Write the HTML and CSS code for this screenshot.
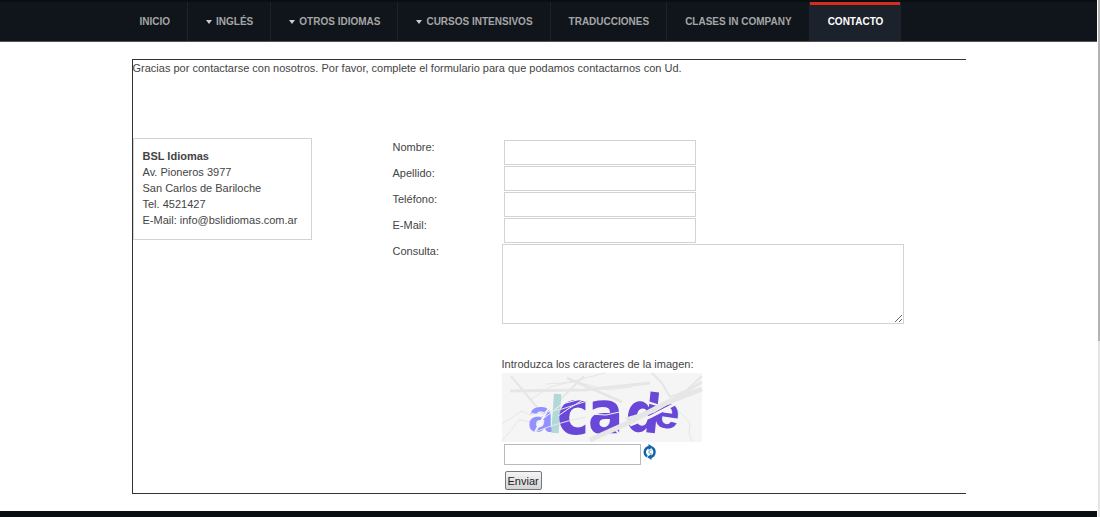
FILE: index.html
```html
<!DOCTYPE html>
<html lang="es">
  <head>
    <meta charset="utf-8">
    <title>BSL Idiomas - Contacto</title>
    <link rel="stylesheet" href="styles.css">
  </head>
  <body>
    <div class="page">
      <nav class="menu">
        <ul>
          <li><a href="#">INICIO</a></li>
          <li><a class="parent" href="#">INGLÉS</a></li>
          <li><a class="parent" href="#">OTROS IDIOMAS</a></li>
          <li><a class="parent" href="#">CURSOS INTENSIVOS</a></li>
          <li><a href="#">TRADUCCIONES</a></li>
          <li><a href="#">CLASES IN COMPANY</a></li>
          <li><a class="active" href="#">CONTACTO</a></li>
        </ul>
      </nav>

      <main class="content">
        <p class="intro">Gracias por contactarse con nosotros. Por favor, complete el formulario para que podamos contactarnos con Ud.</p>
        <div class="columns">
          <address class="info">
            <strong>BSL Idiomas</strong><br>
            Av. Pioneros 3977<br>
            San Carlos de Bariloche<br>
            Tel. 4521427<br>
            E-Mail: info@bslidiomas.com.ar
          </address>

          <form class="contact-form">
            <div class="row">
              <label for="nombre">Nombre:</label>
              <input type="text" id="nombre">
            </div>
            <div class="row">
              <label for="apellido">Apellido:</label>
              <input type="text" id="apellido">
            </div>
            <div class="row">
              <label for="telefono">Teléfono:</label>
              <input type="text" id="telefono">
            </div>
            <div class="row">
              <label for="email">E-Mail:</label>
              <input type="text" id="email">
            </div>
            <div class="row">
              <label for="consulta">Consulta:</label>
              <textarea id="consulta"></textarea>
            </div>

            <div class="captcha">
              <label for="codigo">Introduzca los caracteres de la imagen:</label>
              <svg class="captcha-image" width="200" height="69" viewBox="0 0 200 69">
                <rect width="200" height="69" fill="#f5f5f5"/>
                <!-- lines behind the letters -->
                <g fill="none" stroke="#e6e6e6">
                  <path d="M8 18L82 17L148 10" stroke-width="3"/>
                  <path d="M65 5L120 29" stroke-width="3"/>
                  <path d="M9 3L33 32L42 42" stroke-width="2"/>
                  <path d="M103 0L48 14L28 27"/>
                  <path d="M82 3L52 33" stroke-width="2"/>
                  <path d="M44 11L75 9L106 17L130 14"/>
                  <path d="M0 68L17 47L37 50L55 45"/>
                  <path d="M150 0L160 10L168 24L184 18L200 3" stroke-width="2"/>
                  <path d="M173 34L188 50L187 60L190 68"/>
                </g>
                <g class="captcha-letters">
                  <text class="narrow" x="26" y="59" font-size="46" fill="#9191ff">a</text>
                  <text class="narrow" x="47" y="60" font-size="54" fill="#b2d8d8" transform="rotate(4 53 40)">l</text>
                  <text x="55" y="61" font-size="60" fill="#6a48d7">c</text>
                  <text x="86" y="60" font-size="58" fill="#6a48d7">a</text>
                  <text x="124" y="59" font-size="54" fill="#6a48d7" transform="rotate(6 142 42)">d</text>
                  <text class="narrow" x="152" y="55" font-size="46" fill="#6a48d7" transform="rotate(8 165 42)">e</text>
                </g>
                <!-- scratches over the letters -->
                <g fill="none" stroke="#f5f5f5">
                  <path d="M27 39L42 45L60 31L83 25" stroke-width="1"/>
                  <path d="M33 59L49 31" stroke-width="2"/>
                  <path d="M56 43L66 36L84 25" stroke-width="1"/>
                  <path d="M86 41L104 42L122 38" stroke-width="1"/>
                  <path d="M112 55L118 62L126 52" stroke-width="2"/>
                  <path d="M142 28L158 33L176 28" stroke-width="2"/>
                  <path d="M128 52L148 44L177 29" stroke-width="3"/>
                </g>
                <g fill="none" stroke="#e6e6e6">
                  <path d="M88 67L128 49L164 30L200 16" stroke-width="5"/>
                  <path d="M124 46L152 38L200 9" stroke-width="3"/>
                  <path d="M0 51L20 38L28 42L60 36L85 28"/>
                  <path d="M33 59L49 53L66 48L84 44"/>
                </g>
              </svg>
              <div class="code">
                <input type="text" id="codigo">
                <button type="button" class="reload" aria-label="Recargar">
                  <svg width="14" height="16" viewBox="0 0 14 16">
                    <path d="M4 12.5A5.3 5.3 0 0 1 6 3M9 3.5A5.3 5.3 0 0 1 8 13" fill="none" stroke="#1264a8" stroke-width="2.4"/>
                    <path d="M5.500 0L10 3L5.500 6ZM8.500 10L4 13L8.500 16Z" fill="#1264a8"/>
                    <path d="M8.500 6.800A1.600 1.600 0 1 0 8.500 9.200" fill="none" stroke="#5c9ccb" stroke-width="1"/>
                  </svg>
                </button>
              </div>
              <button type="submit" class="send">Enviar</button>
            </div>
          </form>
        </div>
      </main>

      <footer class="footer"></footer>
    </div>
    <div class="scroll-track"><div class="scroll-thumb"></div></div>
  </body>
</html>
```
FILE: styles.css
```css
body {
  margin: 0;
  display: flex;
  min-height: 100vh;
  background-color: #fff;
  color: #444;
  font-family: "Liberation Sans", Arial, sans-serif;
  font-size: 11px;
  line-height: 16px;
}

.page {
  flex: 1;
  display: flex;
  flex-direction: column;
}

/* Top menu */
.menu {
  background-color: #10151c;
  border-top: 2px solid #090e11;
  border-bottom: 1px solid #505258;
}

.menu ul {
  display: flex;
  max-width: 854px;
  margin: 0 auto;
  padding: 0;
  list-style-type: none;
}

.menu li {
  border-right: 1px solid #1b232e;
}

.menu a {
  display: flex;
  align-items: center;
  gap: 4px;
  height: 33px;
  padding: 3px 17px 3px 18px;
  color: #a5a5a5;
  font-size: 10px;
  font-weight: bold;
  text-decoration: none;
  white-space: nowrap;
}

.menu .parent::before {
  content: "";
  border: 3px solid transparent;
  border-top: 4px solid #ccc;
  border-bottom: 0;
}

.menu .active {
  background-color: #1c222b;
  border-top: 3px solid #d62b1f;
  padding-top: 0;
  color: #fff;
}

/* Contact page */
.content {
  box-sizing: border-box;
  width: 100%;
  max-width: 834px;
  margin: 17px auto;
  border: 1px solid #333;
  border-right: none;
}

.intro {
  margin: 0 0 62px;
}

.columns {
  display: flex;
  align-items: flex-start;
  gap: 81px;
}

.info {
  box-sizing: border-box;
  min-width: 179px;
  padding: 9px 9px 11px;
  border: 1px solid #d3d3d3;
  font-style: normal;
  white-space: nowrap;
}

.contact-form {
  flex: 1;
  padding-top: 1px;
}

.row {
  display: flex;
}

.row label {
  width: 109px;
}

input,
textarea {
  box-sizing: border-box;
  border: 1px solid #d3d3d3;
  background-color: #fff;
  font-family: inherit;
  font-size: 11px;
}

.row input {
  width: 192px;
  height: 25px;
  margin: 1px 0 0 2px;
}

textarea {
  width: 402px;
  height: 80px;
  margin: 1px 0 0;
}

.captcha {
  display: flex;
  flex-direction: column;
  align-items: flex-start;
  margin: 32px 0 3px 109px;
}

.captcha-image {
  margin: 1px 0 2px;
  overflow: visible;
}

.captcha-letters {
  font-family: "DejaVu Sans Condensed", "DejaVu Sans", sans-serif;
  font-weight: bold;
}

.captcha-letters .narrow {
  font-family: "Liberation Sans Narrow", "Liberation Sans", sans-serif;
}

.code {
  display: flex;
  align-items: flex-start;
  gap: 2px;
  margin-left: 2px;
}

.code input {
  width: 137px;
  height: 21px;
  border-color: #b8b8c0;
}

.reload {
  display: flex;
  padding: 0;
  border: none;
  background: none;
  cursor: pointer;
}

.send {
  height: 19px;
  margin: 6px 0 0 3px;
  padding: 0 2px;
  border: 1px solid #777;
  border-radius: 2px;
  background: linear-gradient(#f4f4f4, #d4d4d4);
  color: #222;
  font-family: inherit;
  font-size: 11px;
  cursor: pointer;
}

.footer {
  flex: 1;
  background-color: #090e13;
}

/* Slim scroll bar at the window's edge */
.scroll-track {
  width: 2px;
  border-left: 1px solid #fff;
  background-color: #e4e4e4;
}

.scroll-thumb {
  height: 66vh;
  background-color: #b4b4b4;
}
```
